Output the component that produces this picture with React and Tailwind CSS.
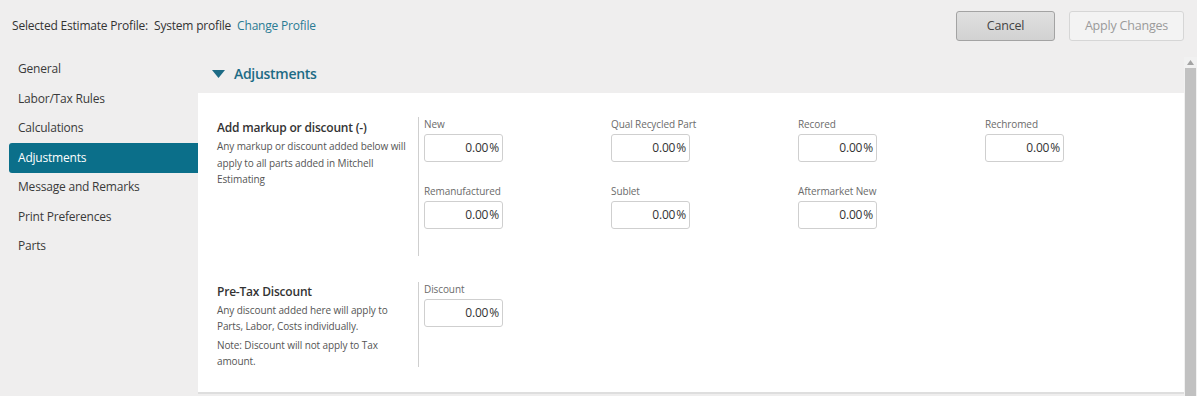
import React from "react";

const navItems = [
  "General",
  "Labor/Tax Rules",
  "Calculations",
  "Adjustments",
  "Message and Remarks",
  "Print Preferences",
  "Parts",
];

const markupRows = [
  ["New", "Qual Recycled Part", "Recored", "Rechromed"],
  ["Remanufactured", "Sublet", "Aftermarket New"],
];

function PercentField({ label }) {
  return (
    <div className="flex flex-col w-[79px]">
      <span className="text-[10px] tracking-[-0.1px] leading-[15px] text-[#6b6b6b] whitespace-nowrap">
        {label}
      </span>
      <div className="mt-[2px] h-[28px] w-[79px] border border-[#cfcfcf] rounded-[3px] bg-white flex items-center justify-end pr-[3px] text-[12px] tracking-[-0.2px] text-[#333]">
        <span>0.00</span>
        <span className="ml-[1px]">%</span>
      </div>
    </div>
  );
}

export default function App() {
  return (
    <div className="w-[1197px] h-[396px] bg-[#efeeee] overflow-hidden flex flex-col font-['Open_Sans',sans-serif] text-[#333]">
      {/* Top bar */}
      <div className="h-[50px] flex items-center justify-between pl-[12px] pr-[13px] pt-[2px] shrink-0">
        <div className="text-[12px] tracking-[-0.2px] flex items-center">
          <span>Selected Estimate Profile:</span>
          <span className="ml-[6px]">System profile</span>
          <span className="ml-[6px] text-[#2a7b94]">Change Profile</span>
        </div>
        <div className="flex items-center gap-[14px]">
          <button className="w-[99px] h-[30px] rounded-[3px] border border-[#a3a3a3] bg-gradient-to-b from-[#e0e0e0] to-[#d2d2d2] text-[12.5px] tracking-[-0.2px] text-[#444]">
            Cancel
          </button>
          <button className="w-[115px] h-[30px] rounded-[3px] border border-[#d6d6d6] bg-[#f3f3f3] text-[12.5px] tracking-[-0.2px] text-[#9a9a9a]">
            Apply Changes
          </button>
        </div>
      </div>

      <div className="flex flex-1 min-h-0">
        {/* Sidebar */}
        <aside className="w-[198px] shrink-0 pl-[9px] pt-[4.5px] flex flex-col">
          {navItems.map((item) => (
            <div
              key={item}
              className={`h-[29.5px] flex items-center pl-[9px] text-[12px] tracking-[-0.2px] ${
                item === "Adjustments"
                  ? "bg-[#0b6f8a] text-white rounded-l-[3px]"
                  : "text-[#3a3a3a]"
              }`}
            >
              {item}
            </div>
          ))}
        </aside>

        {/* Main */}
        <main className="flex-1 flex flex-col min-w-0">
          <div className="h-[43px] shrink-0 flex items-center pl-[14px] pt-[4px]">
            <svg width="13" height="8" viewBox="0 0 13 8" className="mr-[9px]">
              <path d="M0 0 L13 0 L6.5 8 Z" fill="#1d6b85" />
            </svg>
            <span className="text-[14px] tracking-[-0.3px] font-semibold text-[#1d6b85]">Adjustments</span>
          </div>
          <div className="h-[301px] bg-white border-b-[2px] border-[#dedede] flex flex-col pl-[19px] pt-[24px]">
            {/* Markup section */}
            <div className="flex">
              <div className="w-[201px] shrink-0 pr-[8px]">
                <div className="text-[12px] tracking-[-0.2px] font-semibold text-[#333] leading-[18px] mt-[2px]">
                  Add markup or discount (-)
                </div>
                <div className="text-[10px] tracking-[-0.1px] leading-[16.5px] text-[#555] mt-[1px]">
                  Any markup or discount added below will apply to all parts added in Mitchell Estimating
                </div>
              </div>
              <div className="border-l border-[#cfcfcf] pl-[5px] h-[139px] flex flex-col gap-[22px]">
                {markupRows.map((row, i) => (
                  <div key={i} className="grid grid-cols-[187px_187px_187px_187px]">
                    {row.map((label) => (
                      <PercentField key={label} label={label} />
                    ))}
                  </div>
                ))}
              </div>
            </div>

            {/* Pre-tax section */}
            <div className="flex mt-[26px]">
              <div className="w-[201px] shrink-0 pr-[8px]">
                <div className="text-[12px] tracking-[-0.2px] font-semibold text-[#333] leading-[18px] mt-[1px]">
                  Pre-Tax Discount
                </div>
                <div className="text-[10px] tracking-[-0.1px] leading-[16px] text-[#555] mt-[1px] pr-[14px]">
                  Any discount added here will apply to Parts, Labor, Costs individually.
                </div>
                <div className="text-[10px] tracking-[-0.1px] leading-[16px] text-[#555] mt-[3px] pr-[14px]">
                  Note: Discount will not apply to Tax amount.
                </div>
              </div>
              <div className="border-l border-[#cfcfcf] pl-[5px] h-[85px]">
                <PercentField label="Discount" />
              </div>
            </div>
          </div>
        </main>

        {/* Scrollbar */}
        <div className="w-[13px] shrink-0 flex flex-col pt-[7px]">
          <div className="flex-1 bg-[#f1f1f1] flex flex-col items-center">
            <svg width="7" height="5" viewBox="0 0 7 5" className="mt-[3px] mb-[3px]">
              <path d="M0 5 L3.5 0 L7 5 Z" fill="#a3a3a3" />
            </svg>
            <div className="w-[11px] flex-1 bg-[#c1c1c1]" />
          </div>
        </div>
      </div>
    </div>
  );
}
